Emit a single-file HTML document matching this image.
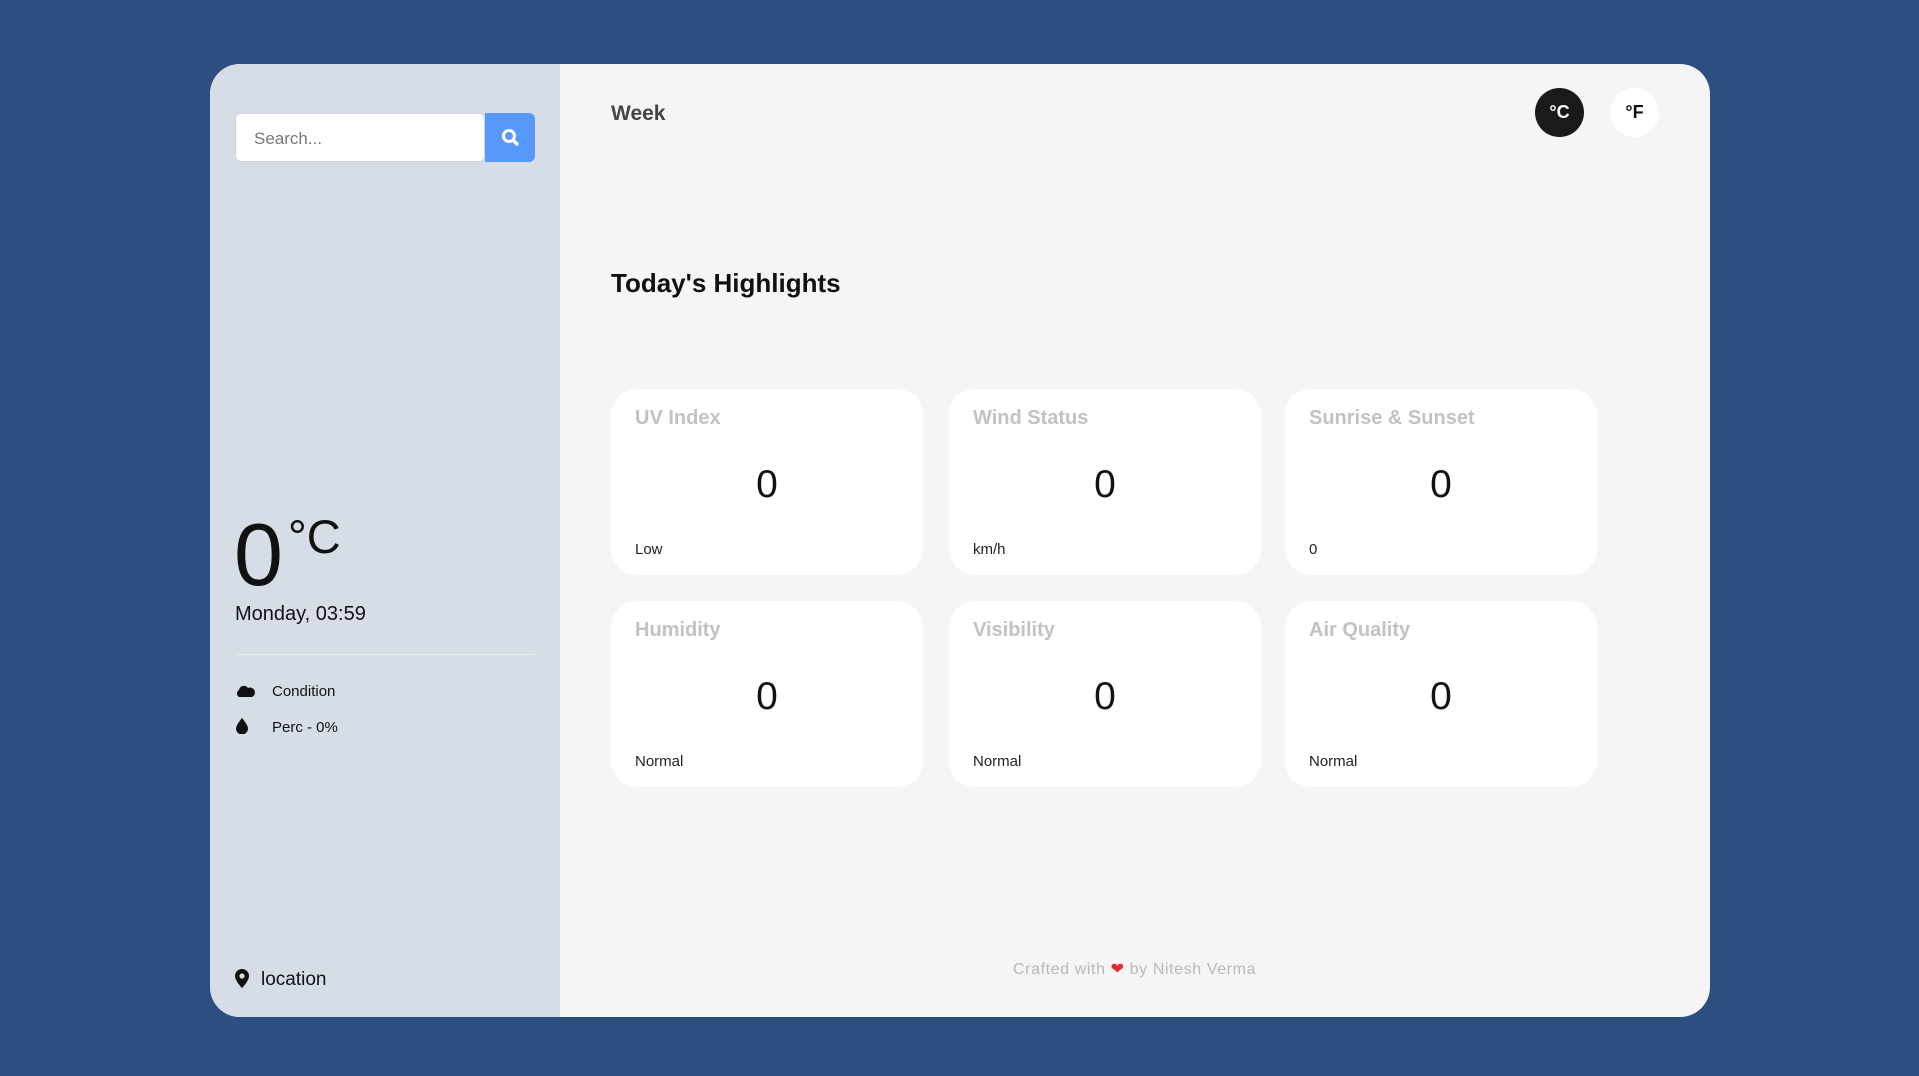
<!DOCTYPE html>
<html><head><meta charset="utf-8"><style>
*{box-sizing:border-box;margin:0;padding:0}
body{width:1919px;height:1076px;background:#2c4e81;font-family:"Liberation Sans",sans-serif;position:relative;overflow:hidden}
.wrap{position:absolute;left:210px;top:64px;width:1500px;height:953px;border-radius:30px;overflow:hidden;background:#f5f5f7}
.side{position:absolute;left:0;top:0;width:350px;height:100%;background:#d7dde7}
.abs{position:absolute}
.search{left:25px;top:49px;width:250px;height:49px;background:#fff;border-radius:6px;border:1px solid #cfd4dc;color:#777;font-size:17px;padding:15px 18px}
.btn{left:275px;top:49px;width:50px;height:49px;background:#5699f9;border-radius:0 6px 6px 0}
.card{position:absolute;width:312px;height:186px;background:#fff;border-radius:26px}
.card .t{position:absolute;left:24px;top:18px;font-size:20px;font-weight:bold;color:#c2c2c4}
.card .v{position:absolute;left:0;width:100%;top:74px;text-align:center;font-size:39px;color:#111}
.card .b{position:absolute;left:24px;top:152px;font-size:15px;color:#222}
</style></head><body>
<div class="wrap">
 <div class="side">
  <div class="abs search">Search...</div>
  <div class="abs btn"><svg width="50" height="49" viewBox="0 0 50 49"><circle cx="24" cy="23" r="5.5" fill="none" stroke="#fff" stroke-width="3"/><line x1="28" y1="27" x2="32" y2="31" stroke="#fff" stroke-width="3.5" stroke-linecap="round"/></svg></div>
  <div class="abs" style="left:24px;top:447px;font-size:88px;line-height:1;color:#111">0</div>
  <div class="abs" style="left:78px;top:449px;font-size:47px;line-height:1;color:#111">°C</div>
  <div class="abs" style="left:25px;top:539px;font-size:20px;color:#111">Monday, 03:59</div>
  <div class="abs" style="left:25px;top:590px;width:300px;height:1px;background:#e8ecf1"></div>
  <svg class="abs" style="left:25px;top:620px" width="20" height="14" viewBox="0 0 20 14"><path d="M4 13 A4 4 0 0 1 4 6 A5 5 0 0 1 13 4 A4.5 4.5 0 0 1 17 13 Z" fill="#111"/></svg>
  <div class="abs" style="left:62px;top:619px;font-size:15px;color:#111">Condition</div>
  <svg class="abs" style="left:26px;top:654px" width="12" height="16" viewBox="0 0 12 16"><path d="M6 0 C6 0 0 7 0 10.5 A6 6 0 0 0 12 10.5 C12 7 6 0 6 0Z" fill="#111"/></svg>
  <div class="abs" style="left:62px;top:655px;font-size:15px;color:#111">Perc - 0%</div>
  <svg class="abs" style="left:25px;top:905px" width="14" height="19" viewBox="0 0 14 19"><path d="M7 0 A7 7 0 0 1 14 7 C14 12 7 19 7 19 C7 19 0 12 0 7 A7 7 0 0 1 7 0Z" fill="#111"/><circle cx="7" cy="7" r="2.6" fill="#d7dde7"/></svg>
  <div class="abs" style="left:51px;top:905px;font-size:19px;color:#111">location</div>
 </div>
 <div class="abs" style="left:401px;top:38px;font-size:21px;font-weight:bold;color:#444">Week</div>
 <div class="abs" style="left:1325px;top:24px;width:49px;height:49px;border-radius:50%;background:#1a1a1a;color:#fff;font-weight:bold;font-size:18px;text-align:center;line-height:49px">°C</div>
 <div class="abs" style="left:1400px;top:24px;width:49px;height:49px;border-radius:50%;background:#fff;color:#111;font-weight:bold;font-size:18px;text-align:center;line-height:49px">°F</div>
 <div class="abs" style="left:401px;top:204px;font-size:26px;font-weight:bold;color:#111">Today's Highlights</div>
 <div class="card" style="left:401px;top:325px"><div class="t">UV Index</div><div class="v">0</div><div class="b">Low</div></div>
 <div class="card" style="left:739px;top:325px"><div class="t">Wind Status</div><div class="v">0</div><div class="b">km/h</div></div>
 <div class="card" style="left:1075px;top:325px"><div class="t">Sunrise &amp; Sunset</div><div class="v">0</div><div class="b">0</div></div>
 <div class="card" style="left:401px;top:537px"><div class="t">Humidity</div><div class="v">0</div><div class="b">Normal</div></div>
 <div class="card" style="left:739px;top:537px"><div class="t">Visibility</div><div class="v">0</div><div class="b">Normal</div></div>
 <div class="card" style="left:1075px;top:537px"><div class="t">Air Quality</div><div class="v">0</div><div class="b">Normal</div></div>
 <div class="abs" style="left:803px;top:895px;font-size:16px;letter-spacing:0.6px;color:#b8b8bb">Crafted with <span style="color:#e8272f">❤</span> by Nitesh Verma</div>
</div>
</body></html>
